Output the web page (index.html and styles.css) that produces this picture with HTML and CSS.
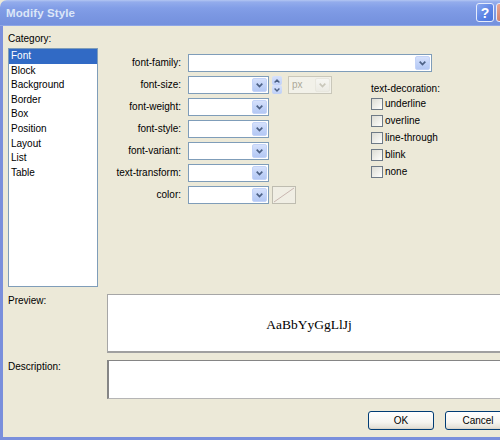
FILE: index.html
```html
<!DOCTYPE html>
<html>
<head>
<meta charset="utf-8">
<title>Modify Style</title>
<link rel="stylesheet" href="styles.css">
</head>
<body>
<div class="window">
  <div class="titlebar">
    <span class="title">Modify Style</span>
    <div class="tbtns">
      <span class="tbtn help">?</span>
      <span class="tbtn close"></span>
    </div>
  </div>
  <div class="frame">
    <div class="body">
      <div class="top">
        <div class="catcol">
          <div class="catlabel">Category:</div>
          <div class="list">
            <div class="item sel">Font</div>
            <div class="item">Block</div>
            <div class="item">Background</div>
            <div class="item">Border</div>
            <div class="item">Box</div>
            <div class="item">Position</div>
            <div class="item">Layout</div>
            <div class="item">List</div>
            <div class="item">Table</div>
          </div>
        </div>
        <div class="form">
          <label class="flabel">font-family:</label>
          <div class="ctrl wide">
            <div class="select family"><span class="arrow"><svg width="7" height="5" viewBox="0 0 7 5"><path d="M0.7 0.7 L3.5 3.6 L6.3 0.7" stroke="#4D6185" stroke-width="1.7" fill="none"/></svg></span></div>
          </div>

          <label class="flabel">font-size:</label>
          <div class="ctrl">
            <div class="select small"><span class="arrow"><svg width="7" height="5" viewBox="0 0 7 5"><path d="M0.7 0.7 L3.5 3.6 L6.3 0.7" stroke="#4D6185" stroke-width="1.7" fill="none"/></svg></span></div>
            <div class="spin">
              <span class="sp"><svg width="6" height="4" viewBox="0 0 6 4"><path d="M0.6 3.4 L3 1 L5.4 3.4" stroke="#4D6185" stroke-width="1.4" fill="none"/></svg></span>
              <span class="sp"><svg width="6" height="4" viewBox="0 0 6 4"><path d="M0.6 0.6 L3 3 L5.4 0.6" stroke="#4D6185" stroke-width="1.4" fill="none"/></svg></span>
            </div>
            <div class="select unit disabled"><span class="val">px</span><span class="arrow"><svg width="7" height="5" viewBox="0 0 7 5"><path d="M0.7 0.7 L3.5 3.6 L6.3 0.7" stroke="#C9C7BA" stroke-width="1.7" fill="none"/></svg></span></div>
          </div>

          <div class="deco">
            <div class="decotitle">text-decoration:</div>
            <div class="chk"><span class="box"></span><span>underline</span></div>
            <div class="chk"><span class="box"></span><span>overline</span></div>
            <div class="chk"><span class="box"></span><span>line-through</span></div>
            <div class="chk"><span class="box"></span><span>blink</span></div>
            <div class="chk"><span class="box"></span><span>none</span></div>
          </div>

          <label class="flabel">font-weight:</label>
          <div class="ctrl">
            <div class="select small"><span class="arrow"><svg width="7" height="5" viewBox="0 0 7 5"><path d="M0.7 0.7 L3.5 3.6 L6.3 0.7" stroke="#4D6185" stroke-width="1.7" fill="none"/></svg></span></div>
          </div>

          <label class="flabel">font-style:</label>
          <div class="ctrl">
            <div class="select small"><span class="arrow"><svg width="7" height="5" viewBox="0 0 7 5"><path d="M0.7 0.7 L3.5 3.6 L6.3 0.7" stroke="#4D6185" stroke-width="1.7" fill="none"/></svg></span></div>
          </div>

          <label class="flabel">font-variant:</label>
          <div class="ctrl">
            <div class="select small"><span class="arrow"><svg width="7" height="5" viewBox="0 0 7 5"><path d="M0.7 0.7 L3.5 3.6 L6.3 0.7" stroke="#4D6185" stroke-width="1.7" fill="none"/></svg></span></div>
          </div>

          <label class="flabel">text-transform:</label>
          <div class="ctrl">
            <div class="select small"><span class="arrow"><svg width="7" height="5" viewBox="0 0 7 5"><path d="M0.7 0.7 L3.5 3.6 L6.3 0.7" stroke="#4D6185" stroke-width="1.7" fill="none"/></svg></span></div>
          </div>

          <label class="flabel">color:</label>
          <div class="ctrl">
            <div class="select small"><span class="arrow"><svg width="7" height="5" viewBox="0 0 7 5"><path d="M0.7 0.7 L3.5 3.6 L6.3 0.7" stroke="#4D6185" stroke-width="1.7" fill="none"/></svg></span></div>
            <div class="swatch"><svg width="22" height="16" viewBox="0 0 22 16"><path d="M1 15 L21 1" stroke="#C9B6B0" stroke-width="1" fill="none"/></svg></div>
          </div>
        </div>
      </div>

      <div class="row preview-row">
        <div class="rlabel">Preview:</div>
        <div class="preview">AaBbYyGgLlJj</div>
      </div>

      <div class="row desc-row">
        <div class="rlabel">Description:</div>
        <div class="desc"></div>
      </div>

      <div class="buttons">
        <button class="btn">OK</button>
        <button class="btn">Cancel</button>
      </div>
    </div>
  </div>
</div>
</body>
</html>
```

FILE: styles.css
```css
* { box-sizing: border-box; }
html, body { margin: 0; padding: 0; }
body {
  width: 500px;
  height: 440px;
  overflow: hidden;
  background: #ECE9D8;
  font-family: "Liberation Sans", Arial, sans-serif;
  font-size: 10px;
  color: #000;
}
.window {
  width: 520px;
  height: 440px;
  display: flex;
  flex-direction: column;
}
.titlebar {
  flex: none;
  height: 26px;
  border-radius: 7px 7px 0 0;
  background: linear-gradient(#B3C6F2 0, #93ACEC 2px, #829EE7 8px, #7B97E2 60%, #7491DE 100%);
  border-bottom: 1px solid #8EA6E6;
  display: flex;
  align-items: center;
  padding: 0 6px 0 6px;
}
.title {
  color: #DCE6F8;
  font-weight: bold;
  font-size: 11.5px;
  letter-spacing: 0.1px;
  padding-top: 1px;
}
.tbtns {
  margin-left: auto;
  display: flex;
  gap: 2px;
}
.tbtn {
  width: 18px;
  height: 19px;
  border-radius: 3px;
  border: 1px solid #E6ECFB;
  display: flex;
  align-items: center;
  justify-content: center;
  color: #fff;
  font-weight: bold;
  font-size: 14px;
}
.help { background: linear-gradient(135deg, #8AA8F0, #5A82E4 60%, #4A74DC); }
.close { background: linear-gradient(135deg, #E8A898, #D0806C 60%, #C27060); }

.frame {
  flex: 1;
  border-left: 3px solid #7A8FDC;
  border-right: 3px solid #7A8FDC;
  border-bottom: 3px solid #7A8FDC;
  background: #ECE9D8;
}
.body {
  padding: 7px 6px 0 5px;
  display: flex;
  flex-direction: column;
}

.top { display: flex; height: 254px; }
.catcol { width: 91px; display: flex; flex-direction: column; }
.catlabel { height: 12px; line-height: 12px; margin-bottom: 3px; }
.list {
  height: 239px;
  border: 1px solid #7F9DB9;
  background: #fff;
}
.item {
  height: 14.6px;
  line-height: 14.6px;
  padding-left: 2px;
  white-space: nowrap;
}
.item.sel { background: #316AC5; color: #fff; }

.form {
  margin-left: 5px;
  margin-top: 21px;
  display: grid;
  grid-template-columns: 78px 176px 140px;
  grid-auto-rows: 18px;
  column-gap: 7px;
  row-gap: 4px;
  align-content: start;
}
.flabel {
  justify-self: end;
  align-self: center;
  line-height: 12px;
  white-space: nowrap;
}
.ctrl { display: flex; align-items: stretch; }
.ctrl.wide { grid-column: 2 / 4; }

.select {
  height: 18px;
  border: 1px solid #7F9DB9;
  background: #fff;
  display: flex;
  align-items: stretch;
  justify-content: flex-end;
  padding: 1px;
}
.select.family { width: 244px; }
.select.small { width: 81px; }
.select.unit { width: 44px; margin-left: 6px; justify-content: space-between; }
.arrow {
  width: 15px;
  border-radius: 2px;
  border: 1px solid #C3D3F8;
  background: linear-gradient(#D6E1FB, #C2D3F8 50%, #B4C8F4);
  display: flex;
  align-items: center;
  justify-content: center;
}
.select.disabled {
  border-color: #C9C7BA;
  background: #F2F1E9;
}
.select.disabled .arrow {
  border-color: #E8E7DE;
  background: linear-gradient(#F6F6F2, #ECEBE4);
}
.val { color: #ACA899; padding-left: 2px; line-height: 14px; }

.spin {
  width: 10px;
  margin-left: 3px;
  display: flex;
  flex-direction: column;
  gap: 0;
}
.sp {
  flex: 1;
  background: linear-gradient(#D6E1FB, #BFD0F7);
  border-radius: 2px;
  display: flex;
  align-items: center;
  justify-content: center;
}

.swatch {
  width: 24px;
  margin-left: 3px;
  border: 1px solid #BEBCB0;
  background: #F0EEE4;
  display: flex;
  align-items: center;
  justify-content: center;
}

.deco {
  grid-column: 3;
  grid-row: 2 / span 6;
  margin-top: 7px;
}
.decotitle { line-height: 12px; height: 12px; white-space: nowrap; }
.chk {
  height: 17px;
  display: flex;
  align-items: center;
  gap: 2px;
  white-space: nowrap;
}
.box {
  width: 12px;
  height: 12px;
  border: 1px solid #6E7A86;
  background: linear-gradient(135deg, #DCDCD4, #F4F4F0 70%, #FFFFFF);
  flex: none;
}

.row { display: flex; }
.rlabel { width: 99px; flex: none; padding-top: 1px; line-height: 12px; }
.preview-row { margin-top: 7px; }
.preview {
  flex: 1;
  height: 59px;
  background: #fff;
  border: 1px solid #A6A6A6;
  border-bottom: 2px solid #A0A0A0;
  display: flex;
  align-items: center;
  justify-content: center;
  padding-top: 4px;
  font-family: "Liberation Serif", "Times New Roman", serif;
  font-size: 13.5px;
}
.desc-row { margin-top: 7px; }
.desc {
  flex: 1;
  height: 39px;
  background: #fff;
  border: 1px solid #B5B5B5;
  border-top-color: #858585;
  border-left: 2px solid #858585;
}

.buttons {
  margin-top: 12px;
  display: flex;
  justify-content: flex-end;
  gap: 11px;
}
.btn {
  width: 66px;
  height: 19px;
  border: 1px solid #003C74;
  border-radius: 3px;
  background: linear-gradient(#FFFFFF, #F6F5F0 60%, #E6E3DA 90%, #D6D0C5);
  font-family: "Liberation Sans", Arial, sans-serif;
  font-size: 10px;
  color: #000;
  padding: 0;
}
```
